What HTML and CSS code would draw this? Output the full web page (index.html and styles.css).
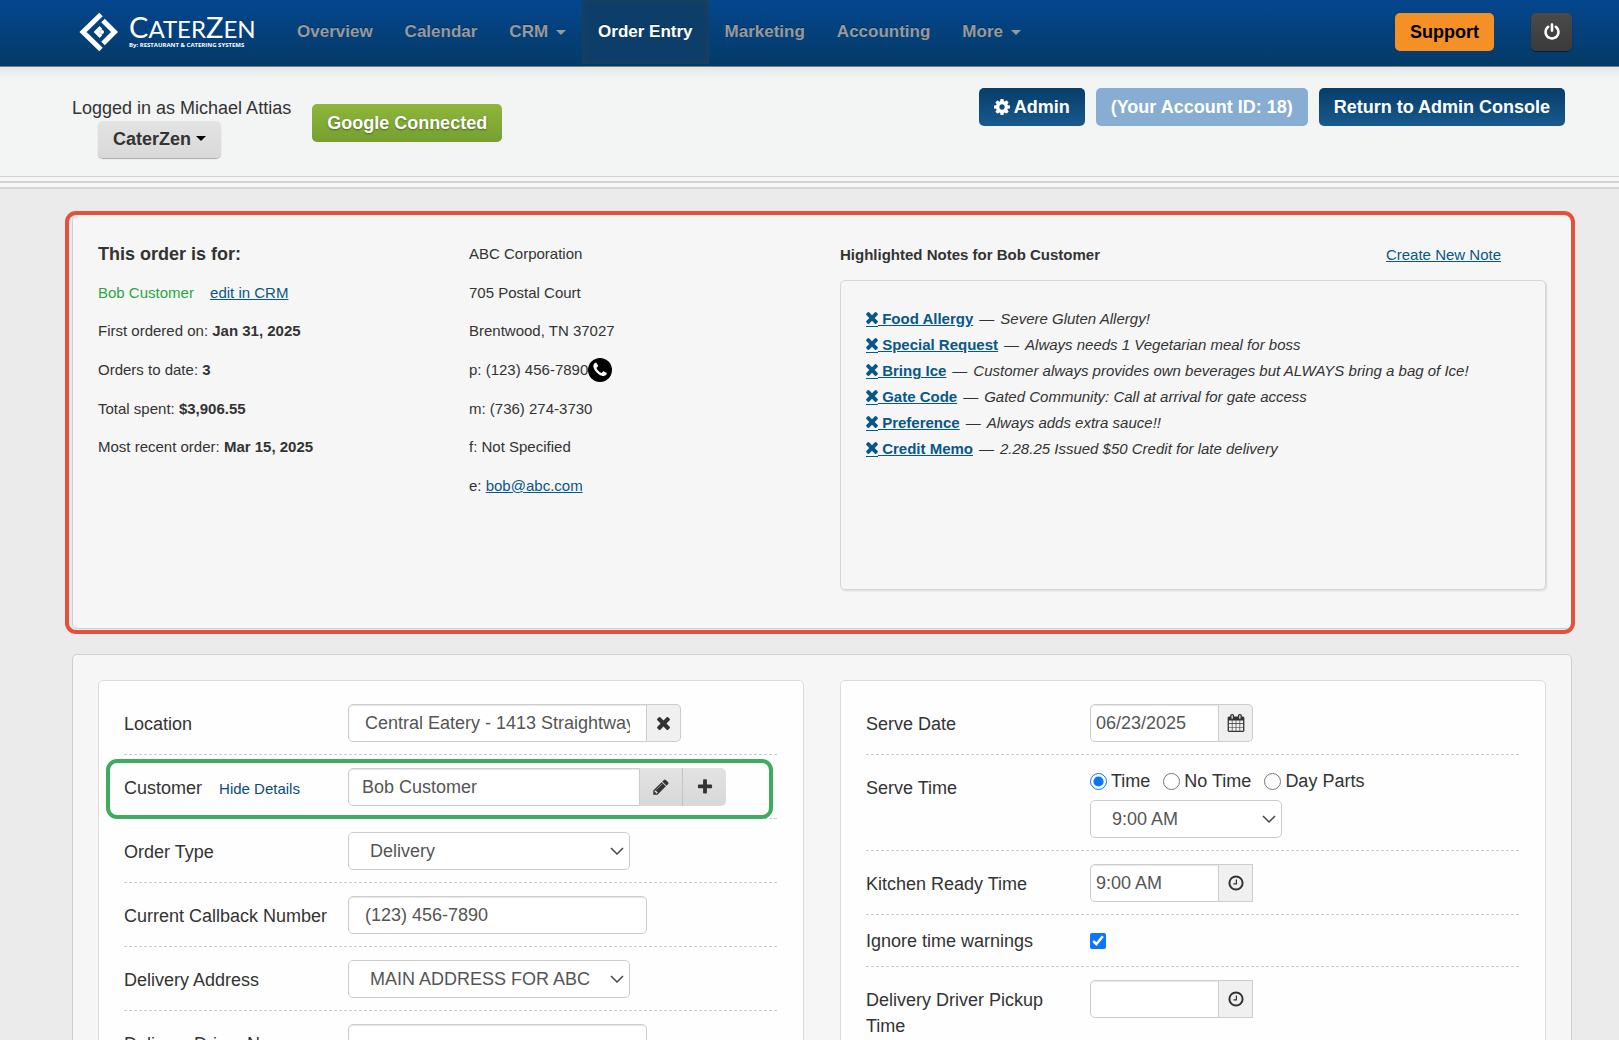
FILE: index.html
```html
<!DOCTYPE html>
<html lang="en">
<head>
  <meta charset="UTF-8" />
  <meta name="viewport" content="width=device-width, initial-scale=1.0" />
  <title>CaterZen - Order Entry</title>
  <link rel="stylesheet" href="styles.css">
</head>
<body>
  <!-- icon sprites -->
  <svg class="sprites" aria-hidden="true">
    <symbol id="i-times" viewBox="296 296 1200 1200"><path d="M1490 1322q0 40-28 68l-136 136q-28 28-68 28t-68-28l-294-294-294 294q-28 28-68 28t-68-28l-136-136q-28-28-28-68t28-68l294-294-294-294q-28-28-28-68t28-68l136-136q28-28 68-28t68 28l294 294 294-294q28-28 68-28t68 28l136 136q28 28 28 68t-28 68l-294 294 294 294q28 28 28 68z" transform="translate(0 -64)"/></symbol>
    <symbol id="i-clock" viewBox="0 0 16 16"><circle cx="8" cy="8" r="6.6" fill="none" stroke="currentColor" stroke-width="2"/><path d="M8.4 4.6v4.2H5.4" fill="none" stroke="currentColor" stroke-width="1.2"/></symbol>
    <symbol id="i-cog" viewBox="128 128 1536 1536"><path d="M1152 896q0-106-75-181t-181-75-181 75-75 181 75 181 181 75 181-75 75-181zm512-109v222q0 12-8 23t-20 13l-185 28q-19 54-39 91 35 50 107 138 10 12 10 25t-9 23q-27 37-99 108t-94 71q-12 0-26-9l-138-108q-44 23-91 38-16 136-29 186-7 28-36 28h-222q-14 0-24.500-8.500t-11.500-21.500l-28-184q-49-16-90-37l-141 107q-10 9-25 9-14 0-25-11-126-114-165-168-7-10-7-23 0-12 8-23 15-21 51-66.500t54-70.500q-27-50-41-99l-183-27q-13-2-21-12.500t-8-23.500v-222q0-12 8-23t19-13l186-28q14-46 39-92-40-57-107-138-10-12-10-24 0-10 9-23 26-36 98.500-107.500t94.500-71.500q13 0 26 10l138 107q44-23 91-38 16-136 29-186 7-28 36-28h222q14 0 24.500 8.500t11.500 21.500l28 184q49 16 90 37l142-107q9-9 24-9 13 0 25 10 129 119 165 170 7 8 7 22 0 12-8 23-15 21-51 66.500t-54 70.500q26 50 41 98l183 28q13 2 21 12.500t8 23.500z"/></symbol>
    <symbol id="i-power" viewBox="0 0 1792 1792"><path d="M1664 896q0 156-61 298t-164 245-245 164-298 61-298-61-245-164-164-245-61-298q0-182 80.500-343t226.500-270q43-32 95.500-25t83.500 50q32 42 24.500 94.500t-49.500 84.500q-98 74-151.500 181t-53.500 228q0 104 40.500 198.500t109.500 163.500 163.500 109.500 198.500 40.500 198.500-40.500 163.500-109.500 109.500-163.500 40.500-198.500q0-121-53.500-228t-151.500-181q-42-32-49.500-84.500t24.500-94.500q31-43 84-50t95 25q146 109 226.500 270t80.500 343zm-640-768v640q0 52-38 90t-90 38-90-38-38-90v-640q0-52 38-90t90-38 90 38 38 90z"/></symbol>
    <symbol id="i-pencil" viewBox="0 0 1792 1792"><path d="M491 1536l91-91-235-235-91 91v107h128v128h107zm523-928q0-22-22-22-10 0-17 7l-542 542q-7 7-7 17 0 22 22 22 10 0 17-7l542-542q7-7 7-17zm-54-192l416 416-832 832h-416v-416zm683 96q0 53-37 90l-166 166-416-416 166-165q36-38 90-38 53 0 91 38l235 234q37 39 37 91z"/></symbol>
    <symbol id="i-plus" viewBox="0 0 1792 1792"><path d="M1600 736v192q0 40-28 68t-68 28h-416v416q0 40-28 68t-68 28h-192q-40 0-68-28t-28-68v-416h-416q-40 0-68-28t-28-68v-192q0-40 28-68t68-28h416v-416q0-40 28-68t68-28h192q40 0 68 28t28 68v416h416q40 0 68 28t28 68z"/></symbol>
    <symbol id="i-calendar" viewBox="0 0 1792 1792"><path d="M192 1664h288v-288h-288v288zm352 0h320v-288h-320v288zm-352-352h288v-320h-288v320zm352 0h320v-320h-320v320zm-352-384h288v-288h-288v288zm736 736h320v-288h-320v288zm-384-736h320v-288h-320v288zm768 736h288v-288h-288v288zm-384-352h320v-320h-320v320zm-352-864v-288q0-13-9.500-22.500t-22.500-9.500h-64q-13 0-22.500 9.500t-9.500 22.500v288q0 13 9.500 22.500t22.500 9.500h64q13 0 22.500-9.500t9.500-22.500zm736 864h288v-320h-288v320zm-384-384h320v-288h-320v288zm384 0h288v-288h-288v288zm32-480v-288q0-13-9.500-22.500t-22.500-9.500h-64q-13 0-22.500 9.500t-9.500 22.500v288q0 13 9.500 22.500t22.500 9.500h64q13 0 22.500-9.500t9.500-22.500zm384-64v1280q0 52-38 90t-90 38h-1408q-52 0-90-38t-38-90v-1280q0-52 38-90t90-38h128v-96q0-66 47-113t113-47h64q66 0 113 47t47 113v96h384v-96q0-66 47-113t113-47h64q66 0 113 47t47 113v96h128q52 0 90 38t38 90z"/></symbol>
    <symbol id="i-phone" viewBox="0 0 24 24"><circle cx="12" cy="12" r="12" fill="#000"/><path transform="translate(3.500 3.500) scale(.0095)" fill="#fff" d="M1600 1240q0 27-10 70.500t-21 68.500q-21 50-122 106-94 51-186 51-27 0-52.500-3.500t-57.500-12.500-47.500-14.500-55.500-20.500-49-18q-98-35-175-83-128-79-264.500-215.500t-215.500-264.500q-48-77-83-175-3-9-18-49t-20.500-55.500-14.500-47.500-12.500-57.500-3.500-52.500q0-92 51-186 56-101 106-122 25-11 68.500-21t70.500-10q14 0 21 3 18 6 53 76 11 19 30 54t35 63.500 31 53.500q3 4 17.500 25t21.500 35.500 7 28.500q0 20-28.500 50t-62 55-62 53-28.500 46q0 9 5 22.500t8.500 20.500 14 24 11.500 19q76 137 174 235t235 174q2 1 19 11.500t24 14 20.500 8.500 22.500 5q18 0 46-28.500t53-62 55-62 50-28.500q14 0 28.500 7t35.500 21.500 25 17.500q25 15 53.500 31t63.500 35 54 30q70 35 76 53 3 7 3 21z"/></symbol>
  </svg>

  <nav class="navbar">
    <a class="brand" href="#">
      <svg class="brand-mark" viewBox="0 0 40 40" aria-hidden="true">
        <g fill="none" stroke="#fff" stroke-width="5">
          <path d="M22 2.500 4 20l18 17.500"/>
          <path d="M24 8.500 35.500 20 24 31.500"/>
        </g>
        <path d="M22 15.500 17.500 20l4.500 4.500" fill="none" stroke="#fff" stroke-width="4"/>
        <circle cx="23" cy="20" r="2" fill="#fff"/>
      </svg>
      <span class="brand-text">
        <span class="brand-name">C<small>ATER</small>Z<small>EN</small></span>
        <span class="brand-sub">By: RESTAURANT &amp; CATERING SYSTEMS</span>
      </span>
    </a>
    <div class="nav-links">
      <a href="#">Overview</a>
      <a href="#">Calendar</a>
      <a href="#">CRM<i class="caret"></i></a>
      <a href="#" class="active">Order Entry</a>
      <a href="#">Marketing</a>
      <a href="#">Accounting</a>
      <a href="#">More<i class="caret"></i></a>
    </div>
    <button class="btn btn-support">Support</button>
    <button class="btn btn-power" aria-label="Log out"><svg class="icon icon-lg"><use href="#i-power"/></svg></button>
  </nav>

  <header class="subheader">
    <div class="account">
      <span>Logged in as Michael Attias</span>
      <button class="btn btn-grey">CaterZen<i class="caret"></i></button>
    </div>
    <button class="btn btn-green">Google Connected</button>
    <div class="admin-actions">
      <button class="btn btn-blue"><svg class="icon"><use href="#i-cog"/></svg>Admin</button>
      <button class="btn btn-light">(Your Account ID: 18)</button>
      <button class="btn btn-blue">Return to Admin Console</button>
    </div>
  </header>
  <div class="rule-lines"></div>

  <main>
    <section class="panel summary">
      <div class="info">
        <h2>This order is for:</h2>
        <p><span class="customer">Bob Customer</span> <a href="#">edit in CRM</a></p>
        <p>First ordered on: <b>Jan 31, 2025</b></p>
        <p>Orders to date: <b>3</b></p>
        <p>Total spent: <b>$3,906.55</b></p>
        <p>Most recent order: <b>Mar 15, 2025</b></p>
      </div>
      <div class="info">
        <p>ABC Corporation</p>
        <p>705 Postal Court</p>
        <p>Brentwood, TN 37027</p>
        <p class="phone">p: (123) 456-7890<svg class="icon icon-phone"><use href="#i-phone"/></svg></p>
        <p>m: (736) 274-3730</p>
        <p>f: Not Specified</p>
        <p>e: <a href="#">bob@abc.com</a></p>
      </div>
      <div class="notes">
        <div class="notes-head">
          <h3>Highlighted Notes for Bob Customer</h3>
          <a href="#">Create New Note</a>
        </div>
        <div class="notes-box">
          <ul>
            <li><a href="#"><svg class="icon"><use href="#i-times"/></svg> Food Allergy</a><span class="dash">—</span><em>Severe Gluten Allergy!</em></li>
            <li><a href="#"><svg class="icon"><use href="#i-times"/></svg> Special Request</a><span class="dash">—</span><em>Always needs 1 Vegetarian meal for boss</em></li>
            <li><a href="#"><svg class="icon"><use href="#i-times"/></svg> Bring Ice</a><span class="dash">—</span><em>Customer always provides own beverages but ALWAYS bring a bag of Ice!</em></li>
            <li><a href="#"><svg class="icon"><use href="#i-times"/></svg> Gate Code</a><span class="dash">—</span><em>Gated Community: Call at arrival for gate access</em></li>
            <li><a href="#"><svg class="icon"><use href="#i-times"/></svg> Preference</a><span class="dash">—</span><em>Always adds extra sauce!!</em></li>
            <li><a href="#"><svg class="icon"><use href="#i-times"/></svg> Credit Memo</a><span class="dash">—</span><em>2.28.25 Issued $50 Credit for late delivery</em></li>
          </ul>
        </div>
      </div>
    </section>

    <form class="panel order-form">
      <div class="card">
        <div class="row">
          <label for="location">Location</label>
          <div class="field">
            <input type="text" id="location" class="wide" value="Central Eatery - 1413 Straightway" />
            <button type="button" class="addon round" aria-label="Clear location"><svg class="icon icon-sm"><use href="#i-times"/></svg></button>
          </div>
        </div>
        <div class="row row-customer">
          <div class="label"><label for="customer">Customer</label> <a href="#">Hide Details</a></div>
          <div class="field">
            <input type="text" id="customer" class="customer-input" value="Bob Customer" />
            <button type="button" class="tool" aria-label="Edit customer"><svg class="icon icon-lg"><use href="#i-pencil"/></svg></button>
            <button type="button" class="tool" aria-label="Add customer"><svg class="icon icon-lg"><use href="#i-plus"/></svg></button>
          </div>
        </div>
        <div class="row">
          <label for="orderType">Order Type</label>
          <div class="field"><select id="orderType"><option>Delivery</option></select></div>
        </div>
        <div class="row">
          <label for="callback">Current Callback Number</label>
          <div class="field"><input type="text" id="callback" class="wide" value="(123) 456-7890" /></div>
        </div>
        <div class="row">
          <label for="address">Delivery Address</label>
          <div class="field"><select id="address"><option>MAIN ADDRESS FOR ABC</option></select></div>
        </div>
        <div class="row">
          <label for="driver">Delivery Driver Name</label>
          <div class="field"><input type="text" id="driver" class="wide" /></div>
        </div>
      </div>

      <div class="card">
        <div class="row">
          <label for="serveDate">Serve Date</label>
          <div class="field">
            <input type="text" id="serveDate" class="short" value="06/23/2025" />
            <button type="button" class="addon round" aria-label="Pick date"><svg class="icon icon-lg"><use href="#i-calendar"/></svg></button>
          </div>
        </div>
        <div class="row">
          <label for="serveTime">Serve Time</label>
          <div>
            <div class="radios">
              <label><input type="radio" name="timeMode" checked />Time</label>
              <label><input type="radio" name="timeMode" />No Time</label>
              <label><input type="radio" name="timeMode" />Day Parts</label>
            </div>
            <div class="field"><select id="serveTime" class="time-select"><option>9:00 AM</option></select></div>
          </div>
        </div>
        <div class="row">
          <label for="kitchenTime">Kitchen Ready Time</label>
          <div class="field">
            <input type="text" id="kitchenTime" class="short" value="9:00 AM" />
            <button type="button" class="addon" aria-label="Pick time"><svg class="icon"><use href="#i-clock"/></svg></button>
          </div>
        </div>
        <div class="row row-check">
          <label for="ignoreWarnings">Ignore time warnings</label>
          <div class="field"><input type="checkbox" id="ignoreWarnings" checked /></div>
        </div>
        <div class="row">
          <label for="pickupTime">Delivery Driver Pickup Time</label>
          <div class="field">
            <input type="text" id="pickupTime" class="short" />
            <button type="button" class="addon" aria-label="Pick time"><svg class="icon"><use href="#i-clock"/></svg></button>
          </div>
        </div>
      </div>
    </form>
  </main>
</body>
</html>
```

FILE: styles.css
```css
* {
  box-sizing: border-box;
}
body {
  margin: 0;
  background-color: #ebebeb;
  color: #333;
  font-family: "Liberation Sans", Arial, sans-serif;
  font-size: 18px;
  line-height: 26px;
}
a {
  color: #08578a;
}
h2, h3, p, ul {
  margin: 0;
  padding: 0;
}
button, input, select {
  font-family: inherit;
  font-size: 18px;
  margin: 0;
}
.sprites {
  display: none;
}
.icon {
  width: 16px;
  height: 16px;
  fill: currentColor;
}
.icon-sm {
  width: 13px;
  height: 13px;
}
.icon-lg {
  width: 18px;
  height: 18px;
}
.caret {
  display: inline-block;
  border: 5px solid transparent;
  border-top-color: currentColor;
  border-bottom: 0;
}

/* top bar */
.navbar {
  display: flex;
  align-items: center;
  height: 67px;
  padding: 0 47px 2px 79px;
  background: linear-gradient(#04468f, #043a66);
  border-bottom: 1px solid #7d7d80;
}
.brand {
  display: flex;
  align-items: center;
  gap: 10px;
  width: 202px;
  color: #fff;
  text-decoration: none;
}
.brand-mark {
  width: 40px;
  height: 40px;
}
.brand-text {
  display: flex;
  flex-direction: column;
  white-space: nowrap;
}
.brand-name {
  font-family: Lato, sans-serif;
  font-size: 29px;
  line-height: 24px;
}
.brand-name small {
  font-size: 24px;
}
.brand-sub {
  font-family: "Open Sans", sans-serif;
  font-size: 6px;
  font-weight: bold;
  line-height: 8px;
}
.nav-links {
  display: flex;
  align-self: stretch;
  margin-right: auto;
}
.nav-links a {
  display: flex;
  align-items: center;
  padding: 0 16px;
  color: #999;
  font-size: 17px;
  font-weight: bold;
  text-decoration: none;
  text-shadow: 0 -1px 0 rgba(0, 0, 0, 0.3);
}
.nav-links .active {
  color: #fff;
  background-color: #0d3e69;
  box-shadow: inset 0 0 8px #24405a;
}
.nav-links .caret {
  margin-left: 8px;
}

.btn {
  height: 38px;
  padding: 0 15px;
  border: 0;
  border-radius: 5px;
  color: #fff;
  font-weight: bold;
  white-space: nowrap;
  cursor: pointer;
}
.btn-support {
  background-color: #f59026;
  color: #000;
}
.btn-power {
  display: flex;
  align-items: center;
  justify-content: center;
  width: 41px;
  margin-left: 37px;
  padding: 0;
  background: linear-gradient(#4a4a4a, #3a3a3a);
  box-shadow: 0 1px 1px rgba(0, 0, 0, 0.5);
}

/* account bar */
.subheader {
  display: flex;
  align-items: flex-start;
  height: 109px;
  padding: 21px 54px 0 72px;
  background: linear-gradient(#e6e7e8, #f3f4f4 12px);
}
.account {
  display: flex;
  flex-direction: column;
  align-items: flex-start;
  margin-right: 21px;
  padding-top: 7px;
}
.account .btn {
  height: 37px;
  margin-left: 26px;
}
.btn-grey {
  background: linear-gradient(#e3e3e3, #d9d9d9);
  box-shadow: 0 1px 1px rgba(0, 0, 0, 0.3);
  color: #333;
}
.btn-grey .caret {
  margin-left: 5px;
  vertical-align: 4px;
  color: #000;
}
.btn-green {
  margin-top: 16px;
  background: linear-gradient(#8fb53c, #75a030);
  text-shadow: 0 1px 2px rgba(0, 0, 0, 0.4);
}
.admin-actions {
  display: flex;
  gap: 11px;
  margin-left: auto;
}
.btn-blue {
  background: linear-gradient(#063c69, #195a8f);
}
.btn-blue .icon {
  margin-right: 4px;
  vertical-align: -2px;
}
.btn-light {
  background-color: #88add2;
}
.rule-lines {
  height: 13px;
  border-top: 1px solid #cfcfcf;
  border-bottom: 2px solid #d5d5d5;
  background: linear-gradient(#f7f7f7 4px, #d3d3d3 4px, #d3d3d3 6px, #f7f7f7 6px);
}

/* panels */
main {
  padding: 25px 47px 25px 72px;
}
.panel {
  margin-bottom: 25px;
  padding: 25px;
  background-color: #f6f6f6;
  border: 1px solid #cfcfcf;
  border-radius: 5px;
}
.summary {
  position: relative;
  display: grid;
  grid-template-columns: repeat(4, 1fr);
  gap: 36px;
  min-height: 415px;
  padding-top: 20px;
  font-size: 15px;
}
/* highlight frame drawn over the panel edge */
.summary::after {
  content: "";
  position: absolute;
  inset: -4px -4px -6px -8px;
  border: 4px solid #e64f3c;
  border-radius: 11px;
  pointer-events: none;
}
.info {
  display: grid;
  grid-template-rows: repeat(7, 1fr);
  align-items: center;
  align-self: start;
  min-height: 270px;
}
.info h2 {
  font-size: 18px;
}
.customer {
  margin-right: 12px;
  color: #2aa745;
}
.phone {
  display: flex;
  align-items: center;
}
.icon-phone {
  width: 24px;
  height: 24px;
}
.notes {
  grid-column: span 2;
}
.notes-head {
  display: flex;
  align-items: center;
  justify-content: space-between;
  height: 40px;
  padding-right: 45px;
}
.notes-head h3 {
  font-size: 15px;
}
.notes-box {
  min-height: 310px;
  margin-top: 5px;
  padding: 25px;
  border: 1px solid #d6d6d6;
  border-radius: 5px;
  box-shadow: 1px 1px 2px rgba(0, 0, 0, 0.12);
}
.notes-box ul {
  list-style: none;
}
.notes-box a {
  font-weight: bold;
}
/* the icon carries its own piece of the link underline */
.notes-box .icon {
  width: 12px;
  height: 15px;
  padding-bottom: 2px;
  border-bottom: 1px solid #08578a;
  vertical-align: -3px;
}
.notes-box .dash {
  margin: 0 6px;
}

/* order form */
.order-form {
  display: grid;
  grid-template-columns: 1fr 1fr;
  gap: 36px;
}
.card {
  padding: 10px 26px 10px 25px;
  background-color: #fefefe;
  border: 1px solid #dcdcdc;
  border-radius: 5px;
}
.row {
  display: grid;
  grid-template-columns: 210px 1fr;
  gap: 14px;
  padding: 13px 0 12px;
  border-bottom: 1px dashed #ccc;
}
.row > label, .row > .label {
  padding-top: 7px;
}
.row-check > label {
  padding-top: 0;
}
.row-customer {
  position: relative;
}
.row-customer::after {
  content: "";
  position: absolute;
  inset: 4px 4px -1px -18px;
  border: 4px solid #3dac5f;
  border-radius: 11px;
  pointer-events: none;
}
.label a {
  margin-left: 12px;
  color: #0a4a80;
  font-size: 15px;
  text-decoration: none;
}
.field {
  display: flex;
  align-items: center;
}
.row > .field {
  align-self: start;
}
input[type="text"], select {
  height: 38px;
  padding: 0 16px;
  background-color: #fff;
  border: 1px solid #ccc;
  border-radius: 5px;
  color: #555;
}
input[type="text"] {
  box-shadow: inset 0 1px 1px rgba(0, 0, 0, 0.08);
}
.wide {
  width: 299px;
}
.customer-input {
  width: 292px;
}
.field .customer-input {
  padding: 0 13px;
}
.short {
  width: 129px;
}
.field .short {
  padding: 0 5px;
}
.field input:not(:last-child) {
  border-radius: 5px 0 0 5px;
}
select {
  width: 282px;
  padding: 0 21px;
  appearance: none;
  background: #fff url("data:image/svg+xml,%3Csvg xmlns='http://www.w3.org/2000/svg' width='14' height='9'%3E%3Cpath d='M1 1l6 6 6-6' fill='none' stroke='%23444' stroke-width='1.500'/%3E%3C/svg%3E") no-repeat right 5px center;
}
.time-select {
  width: 192px;
}
.addon, .tool {
  display: flex;
  align-items: center;
  justify-content: center;
  height: 38px;
  padding: 0;
  color: #333;
}
.addon {
  width: 34px;
  border: 1px solid #ccc;
  border-left: 0;
  background-color: #f0f0f0;
}
.addon.round {
  border-radius: 0 5px 5px 0;
}
.tool {
  width: 43px;
  border: 0;
  border-right: 1px solid #c4c4c4;
  background: linear-gradient(#e3e3e3, #d8d8d8);
}
.tool:last-child {
  border-right: 0;
  border-radius: 0 5px 5px 0;
}
.radios {
  display: flex;
  gap: 13px;
  margin-bottom: 6px;
}
.radios label {
  display: flex;
  align-items: center;
  gap: 4px;
}
input[type="radio"] {
  width: 17px;
  height: 17px;
  accent-color: #0a75ff;
}
input[type="checkbox"] {
  width: 16px;
  height: 16px;
  accent-color: #0a75ff;
}
.row-check .field {
  height: 26px;
}
```
